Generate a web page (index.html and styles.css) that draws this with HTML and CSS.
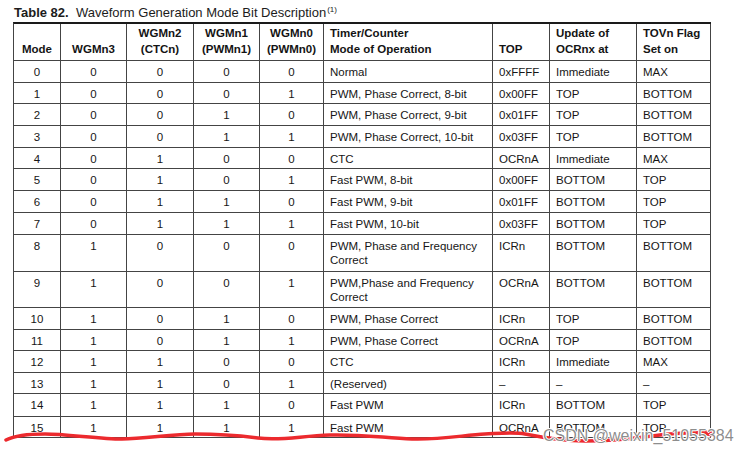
FILE: index.html
```html
<!DOCTYPE html>
<html>
<head>
<meta charset="utf-8">
<link rel="stylesheet" href="styles.css">
</head>
<body>
<div class="page">
  <div class="caption"><b>Table 82.</b>&nbsp; Waveform Generation Mode Bit Description<sup>(1)</sup></div>
  <div class="table">
    <div class="h c"><span>Mode</span></div>
    <div class="h c"><span>WGMn3</span></div>
    <div class="h c"><span>WGMn2</span><span>(CTCn)</span></div>
    <div class="h c"><span>WGMn1</span><span>(PWMn1)</span></div>
    <div class="h c"><span>WGMn0</span><span>(PWMn0)</span></div>
    <div class="h l"><span>Timer/Counter</span><span>Mode of Operation</span></div>
    <div class="h l"><span>TOP</span></div>
    <div class="h l"><span>Update of</span><span>OCRnx at</span></div>
    <div class="h l"><span>TOVn Flag</span><span>Set on</span></div>

    <div class="d c">0</div><div class="d c">0</div><div class="d c">0</div><div class="d c">0</div><div class="d c">0</div>
    <div class="d l">Normal</div><div class="d l">0xFFFF</div><div class="d l">Immediate</div><div class="d l">MAX</div>

    <div class="d c">1</div><div class="d c">0</div><div class="d c">0</div><div class="d c">0</div><div class="d c">1</div>
    <div class="d l">PWM, Phase Correct, 8-bit</div><div class="d l">0x00FF</div><div class="d l">TOP</div><div class="d l">BOTTOM</div>

    <div class="d c">2</div><div class="d c">0</div><div class="d c">0</div><div class="d c">1</div><div class="d c">0</div>
    <div class="d l">PWM, Phase Correct, 9-bit</div><div class="d l">0x01FF</div><div class="d l">TOP</div><div class="d l">BOTTOM</div>

    <div class="d c">3</div><div class="d c">0</div><div class="d c">0</div><div class="d c">1</div><div class="d c">1</div>
    <div class="d l">PWM, Phase Correct, 10-bit</div><div class="d l">0x03FF</div><div class="d l">TOP</div><div class="d l">BOTTOM</div>

    <div class="d c">4</div><div class="d c">0</div><div class="d c">1</div><div class="d c">0</div><div class="d c">0</div>
    <div class="d l">CTC</div><div class="d l">OCRnA</div><div class="d l">Immediate</div><div class="d l">MAX</div>

    <div class="d c">5</div><div class="d c">0</div><div class="d c">1</div><div class="d c">0</div><div class="d c">1</div>
    <div class="d l">Fast PWM, 8-bit</div><div class="d l">0x00FF</div><div class="d l">BOTTOM</div><div class="d l">TOP</div>

    <div class="d c">6</div><div class="d c">0</div><div class="d c">1</div><div class="d c">1</div><div class="d c">0</div>
    <div class="d l">Fast PWM, 9-bit</div><div class="d l">0x01FF</div><div class="d l">BOTTOM</div><div class="d l">TOP</div>

    <div class="d c">7</div><div class="d c">0</div><div class="d c">1</div><div class="d c">1</div><div class="d c">1</div>
    <div class="d l">Fast PWM, 10-bit</div><div class="d l">0x03FF</div><div class="d l">BOTTOM</div><div class="d l">TOP</div>

    <div class="d c">8</div><div class="d c">1</div><div class="d c">0</div><div class="d c">0</div><div class="d c">0</div>
    <div class="d l">PWM, Phase and Frequency<br>Correct</div><div class="d l">ICRn</div><div class="d l">BOTTOM</div><div class="d l">BOTTOM</div>

    <div class="d c">9</div><div class="d c">1</div><div class="d c">0</div><div class="d c">0</div><div class="d c">1</div>
    <div class="d l">PWM,Phase and Frequency<br>Correct</div><div class="d l">OCRnA</div><div class="d l">BOTTOM</div><div class="d l">BOTTOM</div>

    <div class="d c">10</div><div class="d c">1</div><div class="d c">0</div><div class="d c">1</div><div class="d c">0</div>
    <div class="d l">PWM, Phase Correct</div><div class="d l">ICRn</div><div class="d l">TOP</div><div class="d l">BOTTOM</div>

    <div class="d c">11</div><div class="d c">1</div><div class="d c">0</div><div class="d c">1</div><div class="d c">1</div>
    <div class="d l">PWM, Phase Correct</div><div class="d l">OCRnA</div><div class="d l">TOP</div><div class="d l">BOTTOM</div>

    <div class="d c">12</div><div class="d c">1</div><div class="d c">1</div><div class="d c">0</div><div class="d c">0</div>
    <div class="d l">CTC</div><div class="d l">ICRn</div><div class="d l">Immediate</div><div class="d l">MAX</div>

    <div class="d c">13</div><div class="d c">1</div><div class="d c">1</div><div class="d c">0</div><div class="d c">1</div>
    <div class="d l">(Reserved)</div><div class="d l">–</div><div class="d l">–</div><div class="d l">–</div>

    <div class="d c">14</div><div class="d c">1</div><div class="d c">1</div><div class="d c">1</div><div class="d c">0</div>
    <div class="d l">Fast PWM</div><div class="d l">ICRn</div><div class="d l">BOTTOM</div><div class="d l">TOP</div>

    <div class="d c">15</div><div class="d c">1</div><div class="d c">1</div><div class="d c">1</div><div class="d c">1</div>
    <div class="d l">Fast PWM</div><div class="d l">OCRnA</div><div class="d l">BOTTOM</div><div class="d l">TOP</div>
  </div>

  <svg class="scribble" width="753" height="454" viewBox="0 0 753 454">
    <path d="M6,440 C14,436 24,434 45,434 S100,439 122,439 S172,434 195,434 S235,435 258,438 S300,436 330,435 S385,438 412,439 S465,435 485,434 S515,432 525,434 S560,441 585,441 S630,439 652,436 S690,432 710,433" fill="none" stroke="#ec2a2e" stroke-width="3.5" stroke-linecap="round" stroke-linejoin="round"/>
    <path d="M700,432 L712,434" stroke="#ec2a2e" stroke-width="5" stroke-linecap="round"/>
  </svg>
  <div class="watermark">CSDN @weixin_51055384</div>
</div>
</body>
</html>
```
FILE: styles.css
```css
html, body {
  margin: 0;
  padding: 0;
  background: #ffffff;
}

.page {
  position: relative;
  width: 753px;
  height: 454px;
  overflow: hidden;
  font-family: "Liberation Sans", Arial, sans-serif;
  color: #161616;
}

.caption {
  padding: 5px 0 1px 14px;
  height: 16px;
  line-height: 16px;
  font-size: 13px;
  color: #1c1c1c;
  white-space: nowrap;
}

.caption b {
  font-weight: 700;
}

.caption sup {
  font-size: 8px;
  line-height: 0;
  vertical-align: 5px;
  margin-left: 1px;
}

.table {
  margin-left: 13px;
  width: max-content;
  display: grid;
  grid-template-columns: 47px 66px 67px 66px 64px 169px 57px 87px 74px;
  grid-template-rows: 37px 22px 21px 22px 22px 21px 22px 22px 22px 37px 36px 22px 21px 22px 21px 23px 21px;
  border-top: 2px solid #1a1a1a;
  border-left: 1px solid #444;
  font-size: 11.5px;
}

.h, .d {
  box-sizing: border-box;
  border-right: 1px solid #444;
  border-bottom: 1px solid #444;
  white-space: nowrap;
}

.h {
  display: flex;
  flex-direction: column;
  justify-content: flex-end;
  padding: 0 6px 3px 6px;
  line-height: 16px;
  font-weight: 700;
  color: #141414;
}

.h.c {
  align-items: center;
  padding-left: 2px;
  padding-right: 2px;
}

.d {
  padding: 4px 6px 0 6px;
  line-height: 14px;
}

.c {
  text-align: center;
}

.l {
  text-align: left;
}

.scribble {
  position: absolute;
  left: 0;
  top: 0;
  pointer-events: none;
}

.watermark {
  position: absolute;
  left: 543px;
  top: 427px;
  font-family: "Liberation Sans", Arial, sans-serif;
  font-size: 16px;
  line-height: 18px;
  color: rgba(120, 120, 120, 0.85);
  white-space: nowrap;
  text-shadow: 1px 0 0 #fff, -1px 0 0 #fff, 0 1px 0 #fff, 0 -1px 0 #fff;
}
```
